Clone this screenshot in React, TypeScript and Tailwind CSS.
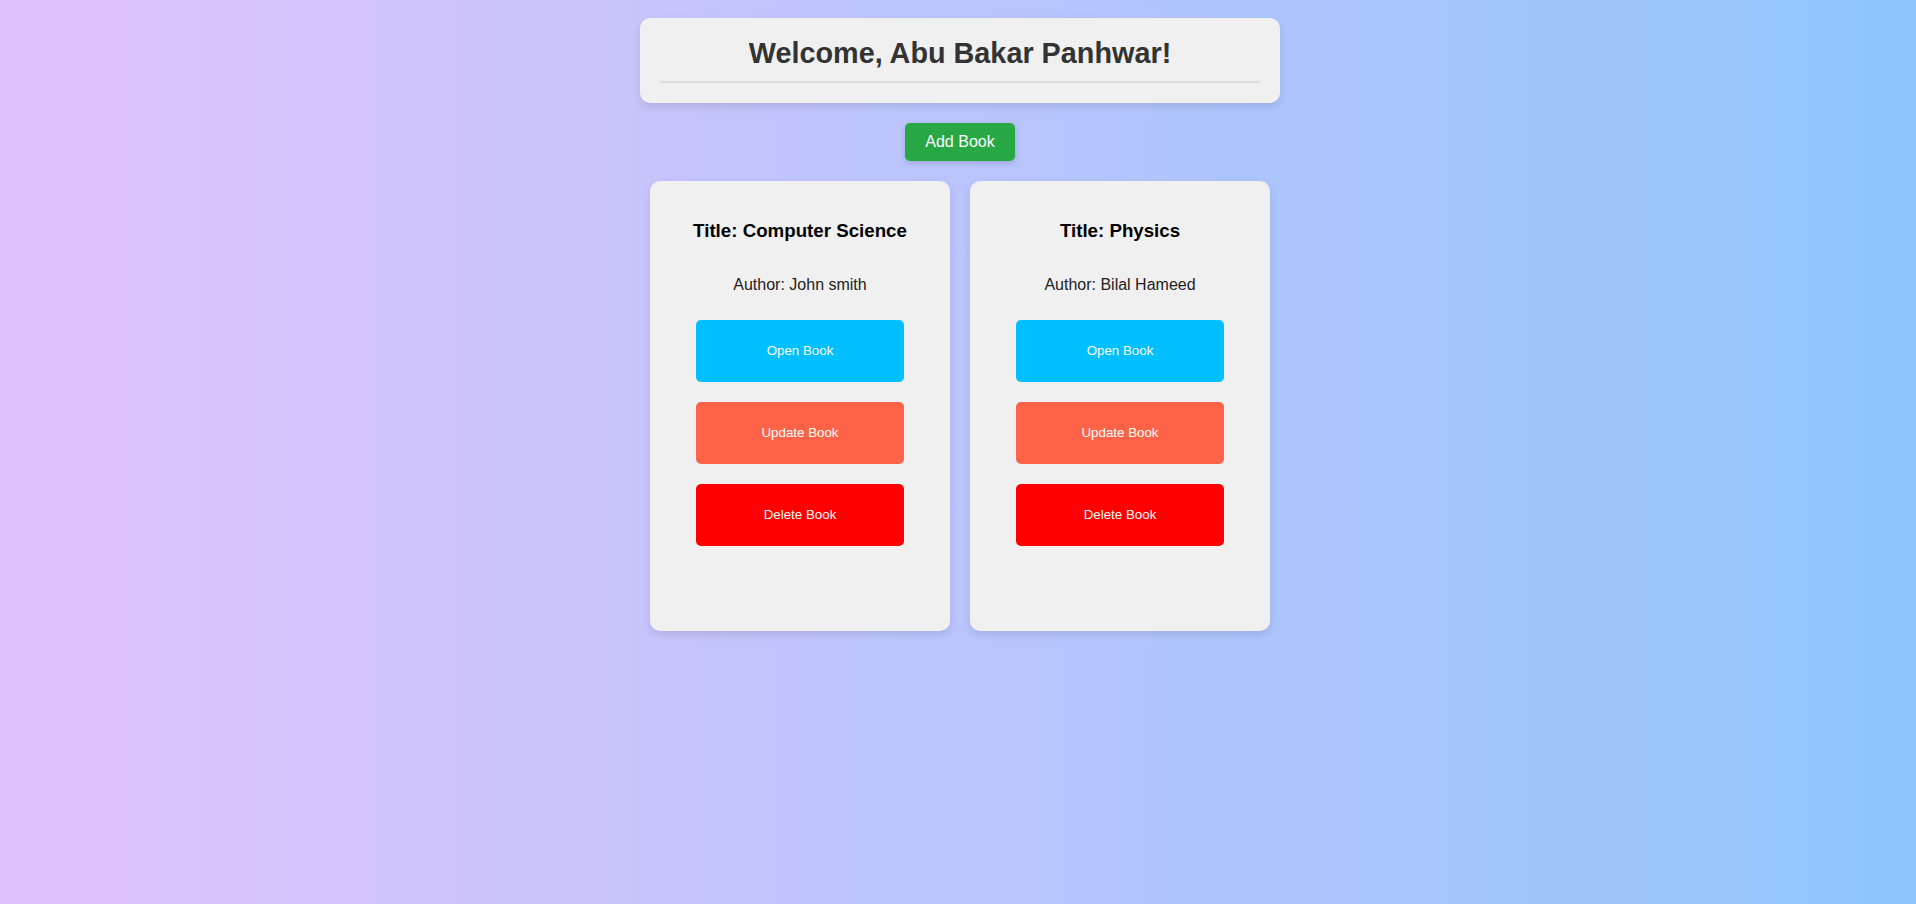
const books = [
  { title: "Computer Science", author: "John smith" },
  { title: "Physics", author: "Bilal Hameed" },
];

function BookCard({ title, author }: { title: string; author: string }) {
  return (
    <div className="w-[300px] h-[450px] rounded-[10px] bg-[#f0f0f0] shadow-[0_4px_8px_rgba(0,0,0,0.1)] flex flex-col items-center pt-[39px]">
      <h3 className="text-[18.72px] leading-[22px] font-bold text-black">Title: {title}</h3>
      <p className="mt-[34px] text-base leading-[18px] text-[#222]">Author: {author}</p>
      <div className="mt-[26px] flex flex-col gap-5">
        <button className="w-[208px] h-[62px] rounded-[5px] bg-[#00bfff] text-white text-[13.33px]">Open Book</button>
        <button className="w-[208px] h-[62px] rounded-[5px] bg-[#ff6347] text-white text-[13.33px]">Update Book</button>
        <button className="w-[208px] h-[62px] rounded-[5px] bg-[#ff0000] text-white text-[13.33px]">Delete Book</button>
      </div>
    </div>
  );
}

export default function App() {
  return (
    <div className="min-h-screen bg-linear-to-r from-[#e0c3fc] to-[#8ec5fc] font-['Liberation_Sans',Arial,sans-serif] pt-[18px] pl-1 flex flex-col items-center">
      <div className="w-[640px] rounded-[10px] bg-[#f0f0f0] shadow-[0_4px_8px_rgba(0,0,0,0.1)] px-5 pt-5 pb-5 text-center">
        <h1 className="text-[28.8px] leading-[30px] font-bold text-[#333] mb-[13px]">Welcome, Abu Bakar Panhwar!</h1>
        <div className="h-[2px] bg-[#ddd]" />
      </div>

      <button className="mt-5 h-[38px] w-[110px] rounded-[5px] bg-[#28a745] text-white text-base shadow-[0_2px_6px_rgba(0,0,0,0.15)]">
        Add Book
      </button>

      <div className="mt-5 flex gap-5">
        {books.map((b) => (
          <BookCard key={b.title} title={b.title} author={b.author} />
        ))}
      </div>
    </div>
  );
}
